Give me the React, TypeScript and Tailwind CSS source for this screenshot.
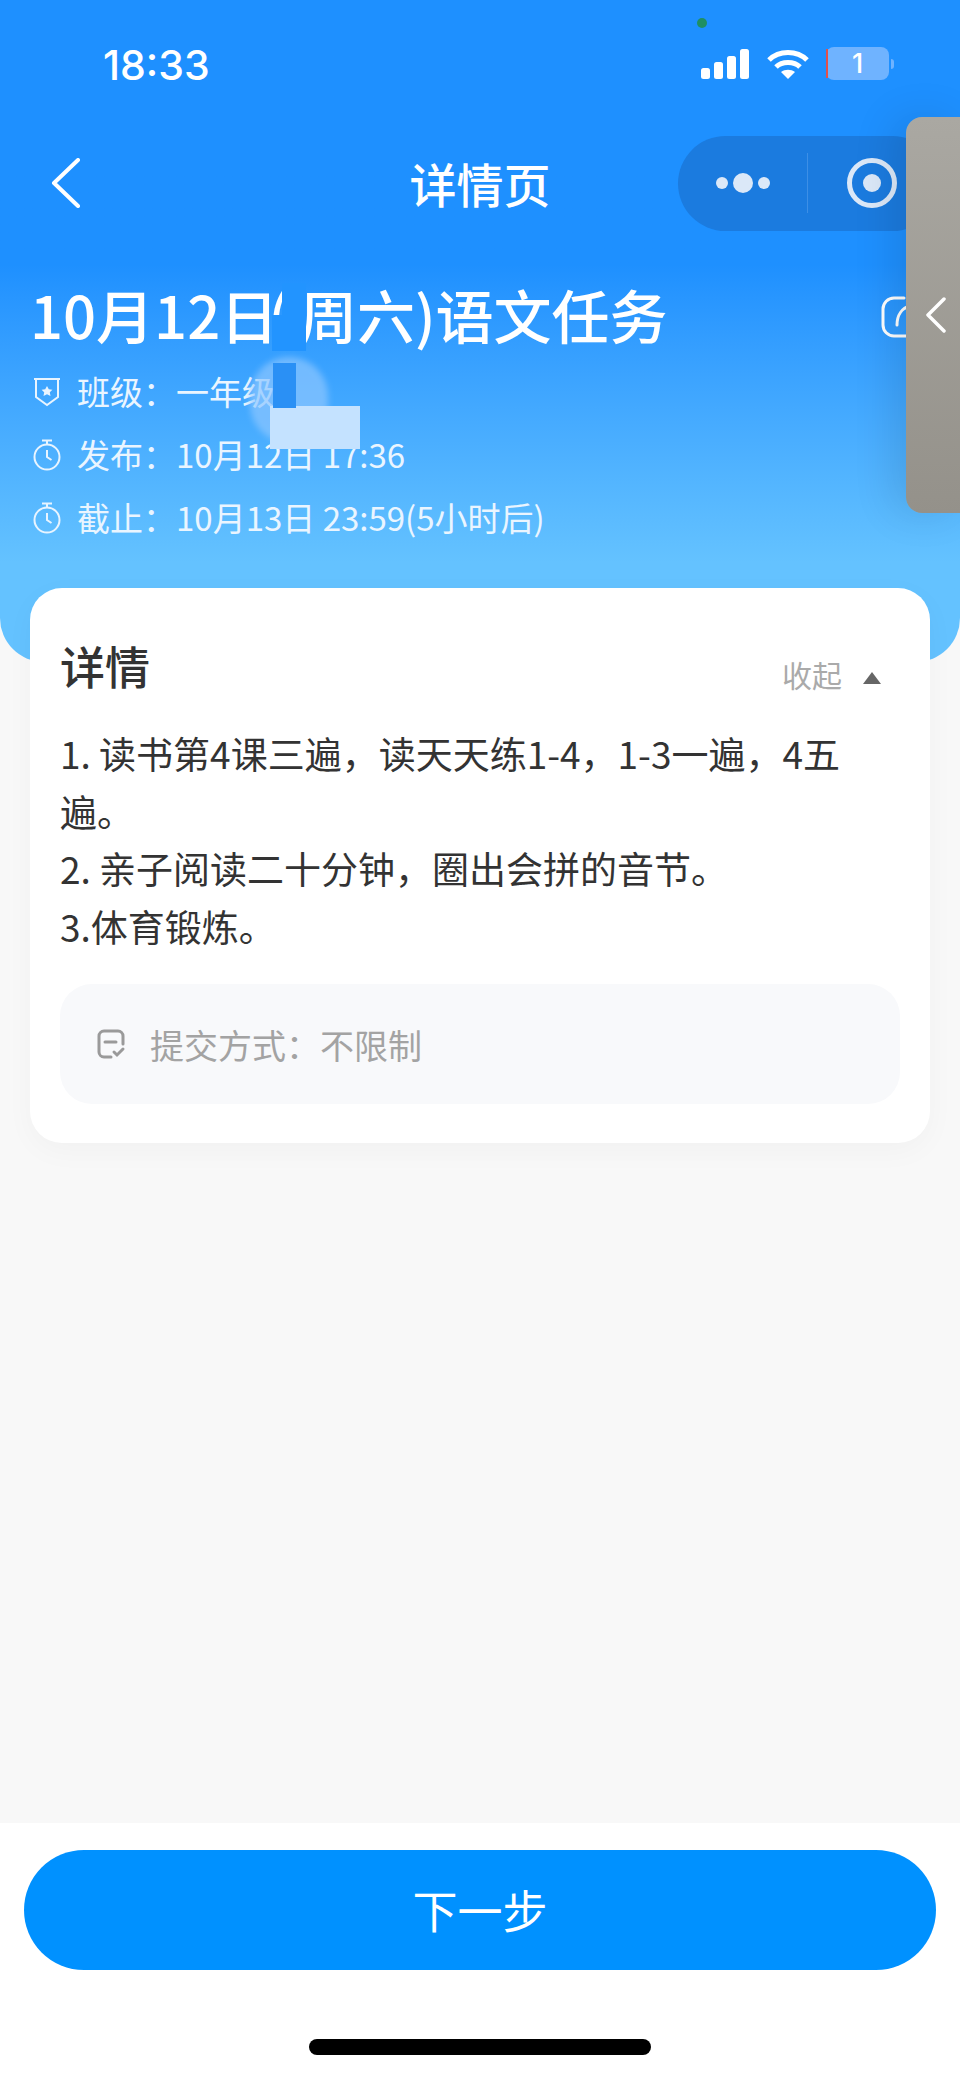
const FONT = "font-['Noto_Sans_CJK_SC','Noto_Sans',sans-serif]"

function SignalIcon() {
  return (
    <svg width="48" height="30" viewBox="0 0 48 30" fill="#fff">
      <rect x="0" y="19" width="9" height="11" rx="2.5" />
      <rect x="13" y="13" width="9" height="17" rx="2.5" />
      <rect x="26" y="7" width="9" height="23" rx="2.5" />
      <rect x="39" y="0" width="9" height="30" rx="2.5" />
    </svg>
  )
}

function WifiIcon() {
  return (
    <svg width="42" height="30" viewBox="0 0 42 30" fill="none" stroke="#fff" strokeWidth="5">
      <path d="M2 11 C12 1 30 1 40 11" />
      <path d="M9 18 C15 12 27 12 33 18" />
      <path d="M21 30 L14 23 C18 20 24 20 28 23 Z" fill="#fff" stroke="none" />
    </svg>
  )
}

function ShieldIcon() {
  return (
    <svg width="28" height="30" viewBox="0 0 28 30" fill="none" stroke="#e8f4ff" strokeWidth="2">
      <path d="M1 2 H27" />
      <path d="M3 2 V20 L14 28 L25 20 V2" />
      <path d="M14 9 L15.8 12.2 L19.4 12.8 L16.8 15.3 L17.5 19 L14 17.2 L10.5 19 L11.2 15.3 L8.6 12.8 L12.2 12.2 Z" fill="#e8f4ff" stroke="none" />
    </svg>
  )
}

function TimerIcon() {
  return (
    <svg width="28" height="32" viewBox="0 0 28 32" fill="none" stroke="#e8f4ff" strokeWidth="2">
      <path d="M9 1.5 H19" />
      <path d="M14 1.5 V5" />
      <circle cx="14" cy="18" r="12.5" />
      <path d="M14 11 V18 L18.5 21" />
    </svg>
  )
}

function SubmitIcon() {
  return (
    <svg width="30" height="30" viewBox="0 0 30 30" fill="none" stroke="#9a9a9a" strokeWidth="3" strokeLinecap="round">
      <path d="M27 15 V7 A5 5 0 0 0 22 2 H8 A5 5 0 0 0 3 7 V23 A5 5 0 0 0 8 28 H15" />
      <path d="M9 13 H20" />
      <path d="M18 23 L21 26 L27 20" />
    </svg>
  )
}

function MetaRow({ icon, label, value }: { icon: React.ReactNode; label: string; value: string }) {
  return (
    <div className="flex h-[63px] items-center text-[33px] text-[#eaf5ff]">
      <div className="flex w-[47px] justify-start pl-[3px]">{icon}</div>
      <span className="w-[99px] whitespace-nowrap">{label}</span>
      <span className="whitespace-nowrap">{value}</span>
    </div>
  )
}

export default function App() {
  return (
    <div className={`${FONT} relative flex h-[2079px] w-[960px] flex-col overflow-hidden bg-[#f8f8f8]`}>
      <header className="h-[662px] shrink-0 rounded-b-[44px] bg-linear-to-b from-[#1e90ff] from-40% to-[#64c2ff] to-85% text-white">
        <div className="flex h-[128px] items-start justify-between pt-[47px] pl-[103px] pr-[66px]">
          <span className="text-[41px] leading-[36px] font-medium font-['Inter',sans-serif]">18:33</span>
          <div className="flex items-center">
            <SignalIcon />
            <div className="ml-[18px]"><WifiIcon /></div>
            <div className="relative ml-[17px] flex h-[33px] w-[63px] items-center justify-center rounded-[8px] bg-[#6fb3ff] text-[27px] leading-none font-medium font-['Inter',sans-serif]">
              1
              <span className="absolute top-[2px] bottom-[2px] left-0 w-[2px] bg-[#e2504b]" />
            </div>
            <span className="ml-[2px] h-[10px] w-[3px] rounded-r-full bg-[#6fb3ff]" />
          </div>
        </div>
        <nav className="grid h-[110px] grid-cols-[1fr_auto_1fr] items-center px-[20px]">
          <svg className="ml-[31px]" width="30" height="50" viewBox="0 0 30 50" fill="none" stroke="#fff" strokeWidth="4" strokeLinecap="round" strokeLinejoin="round">
            <path d="M27 2 L3 25 L27 48" />
          </svg>
          <h1 className="text-[47px] font-medium">详情页</h1>
          <div className="flex h-[95px] w-[262px] items-center justify-self-end rounded-full bg-[#1b7bdf]">
            <div className="ml-[38px] flex items-center gap-[5px]">
              <span className="h-[12px] w-[12px] rounded-full bg-[#dbe8f8]" />
              <span className="h-[20px] w-[20px] rounded-full bg-[#dbe8f8]" />
              <span className="h-[12px] w-[12px] rounded-full bg-[#dbe8f8]" />
            </div>
            <span className="ml-[37px] h-[60px] w-px bg-[#3d8fe6]" />
            <div className="ml-[39px] flex h-[50px] w-[50px] items-center justify-center rounded-full border-[5px] border-[#dbe8f8]">
              <span className="h-[18px] w-[18px] rounded-full bg-[#dbe8f8]" />
            </div>
          </div>
        </nav>
        <div className="pl-[30px]">
          <h2 className="mt-[46px] h-[60px] text-[58px] leading-[60px] font-medium whitespace-nowrap">
            10月12<span className="tracking-[-10px]">日</span><span className="tracking-[10px]">(</span>周六)语文任务
          </h2>
          <div className="mt-[16px]">
            <MetaRow icon={<ShieldIcon />} label="班级：" value="一年级" />
            <MetaRow icon={<TimerIcon />} label="发布：" value="10月12日 17:36" />
            <MetaRow icon={<TimerIcon />} label="截止：" value="10月13日 23:59(5小时后)" />
          </div>
        </div>
      </header>

      <main className="flex-1 px-[30px]">
        <section className="-mt-[74px] h-[555px] rounded-[32px] bg-white px-[30px] pt-[48px] shadow-[0_8px_30px_rgba(0,0,0,0.03)]">
          <div className="flex items-center justify-between">
            <h3 className="text-[45px] leading-[60px] font-medium text-[#333]">详情</h3>
            <div className="mt-[16px] mr-[19px] flex items-center text-[#aaaaaa]">
              <span className="text-[30px] leading-[40px]">收起</span>
              <span className="mt-[8px] ml-[21px] h-0 w-0 border-x-[9px] border-b-[12px] border-x-transparent border-b-[#666]" />
            </div>
          </div>
          <p className="mt-[29px] w-[810px] text-[37px] leading-[57.5px] text-[#333]">
            1. 读书第4课三遍，读天天练1-4，1-3一遍，4五遍。
            <br />
            2. 亲子阅读二十分钟，圈出会拼的音节。
            <br />
            3.体育锻炼。
          </p>
          <div className="mt-[29px] flex h-[120px] w-[840px] items-center rounded-[32px] bg-[#f8f9fb] pl-[36px] text-[34px] text-[#a3a3a3]">
            <SubmitIcon />
            <span className="ml-[24px]">提交方式：不限制</span>
          </div>
        </section>
      </main>

      <footer className="flex h-[256px] shrink-0 flex-col items-center bg-white pt-[27px]">
        <button className="h-[120px] w-[912px] rounded-full bg-[#0091ff] text-[45px] text-white">下一步</button>
        <span className="mt-[69px] h-[16px] w-[342px] rounded-full bg-black" />
      </footer>

      {/* camera dot */}
      <span className="absolute top-[18px] left-[697px] h-[10px] w-[10px] rounded-full bg-[#1f8f63]" />

      {/* share icon, half under the floating panel */}
      <svg className="absolute top-[295px] left-[880px]" width="46" height="44" viewBox="0 0 46 44" fill="none" stroke="#fff" strokeWidth="3" strokeLinecap="round">
        <path d="M24 3 H14 A11 11 0 0 0 3 14 V30 A11 11 0 0 0 14 41 H30" />
        <path d="M17 30 C17 20 22 13 30 11" />
      </svg>

      {/* floating side panel */}
      <div className="absolute top-[117px] left-[906px] flex h-[396px] w-[60px] items-center rounded-l-[16px] bg-linear-to-b from-[#aaa8a2] to-[#94918a] shadow-[-14px_0_40px_rgba(0,0,0,0.1)]">
        <svg className="ml-[19px]" width="22" height="36" viewBox="0 0 22 36" fill="none" stroke="#fff" strokeWidth="3.5" strokeLinecap="round" strokeLinejoin="round">
          <path d="M19 2 L3 18 L19 34" />
        </svg>
      </div>

      {/* scrubbed patch over the class name */}
      <div className="absolute top-[357px] left-[250px] h-[86px] w-[78px] rounded-full bg-[#8cc6ff] opacity-70 blur-[3px]" />
      <div className="absolute top-[406px] left-[270px] h-[43px] w-[90px] bg-[#c4e2ff]" />
      <div className="absolute top-[363px] left-[273px] h-[45px] w-[23px] bg-[#2a90f5]" />

      {/* scrubbed part of the title */}
      <div className="absolute top-[315px] left-[272px] h-[36px] w-[12px] bg-[#2294ff]" />
      <div className="absolute top-[283px] left-[282px] h-[68px] w-[24px] bg-[#2294ff]" />
    </div>
  )
}
